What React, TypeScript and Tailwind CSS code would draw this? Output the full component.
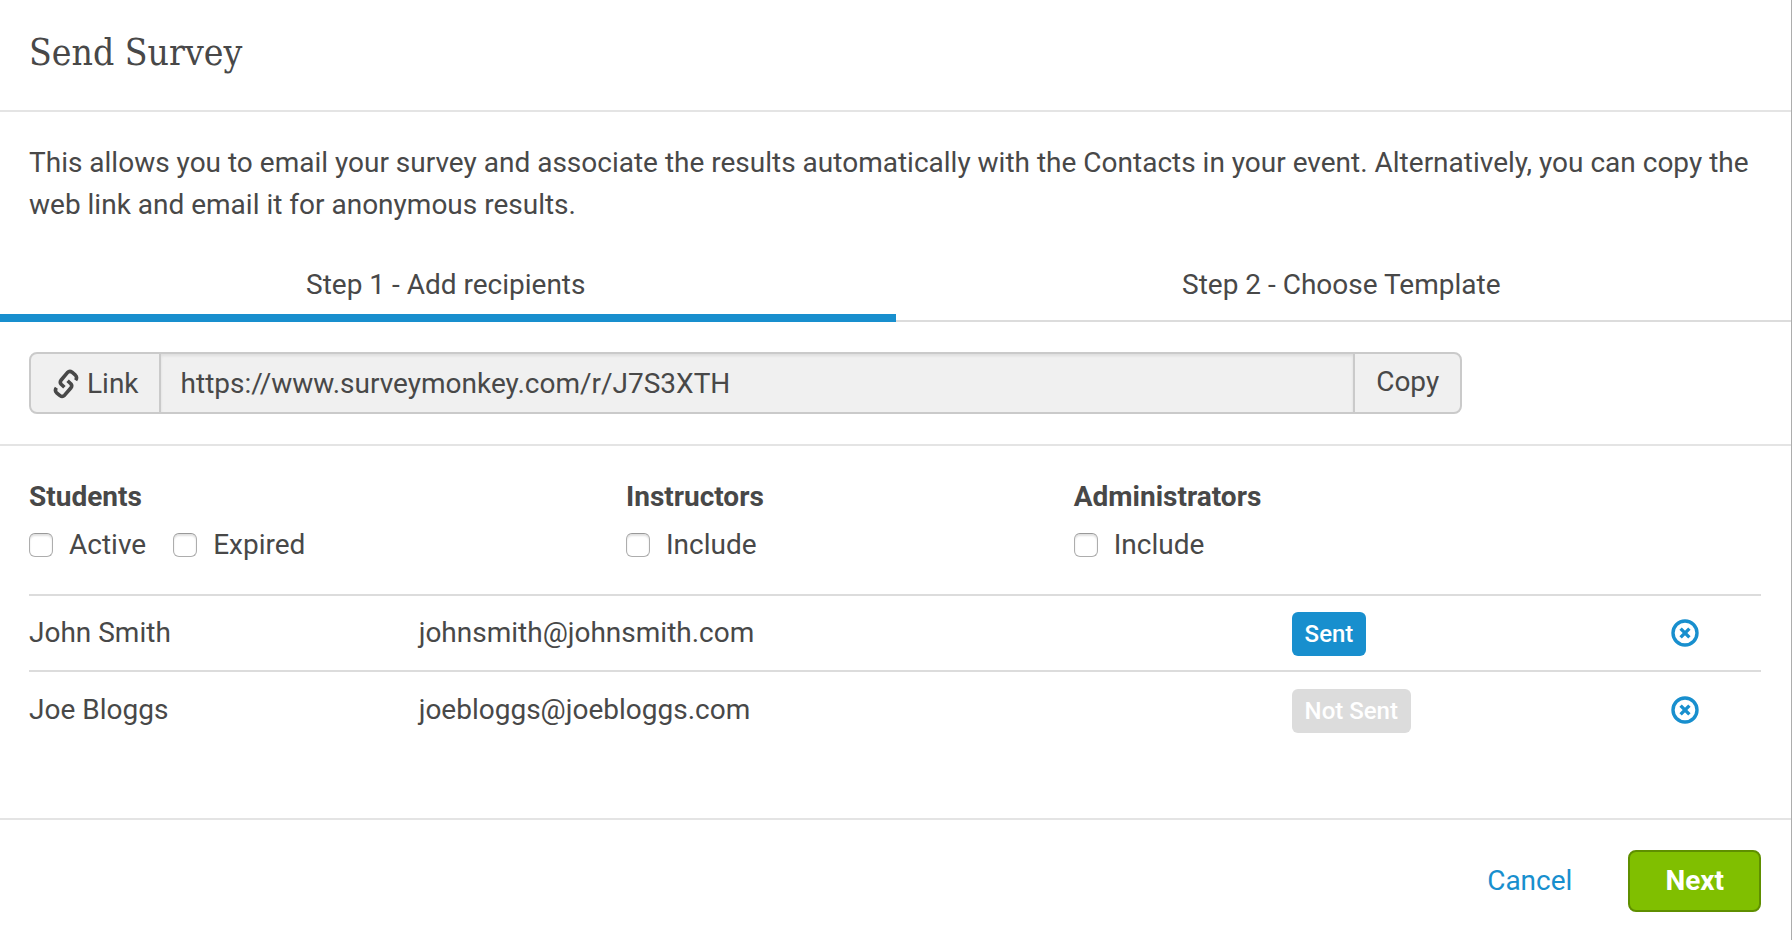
import { useState } from 'react';

type Recipient = {
    name: string;
    email: string;
    sent: boolean;
};

const SURVEY_URL = 'https://www.surveymonkey.com/r/J7S3XTH';

const initialRecipients: Recipient[] = [
    { name: 'John Smith', email: 'johnsmith@johnsmith.com', sent: true },
    { name: 'Joe Bloggs', email: 'joebloggs@joebloggs.com', sent: false },
];

const groups = [
    { title: 'Students', options: ['Active', 'Expired'], span: 'col-span-4' },
    { title: 'Instructors', options: ['Include'], span: 'col-span-3' },
    { title: 'Administrators', options: ['Include'], span: 'col-span-5' },
];

function LinkIcon() {
    return (
        <svg width="26" height="30" viewBox="0 0 26 30" fill="none" stroke="currentColor" strokeWidth="3.6" strokeLinejoin="round" aria-hidden="true">
            <path d="M11.4 18.2 L8.2 15.2 Q6.4 13.2 8.2 11 L14.4 3.6 Q16.6 1.4 19 3.2 L22.4 6.2 Q24.6 8.4 22.6 11.2" />
            <path d="M14.6 11.8 L17.8 14.8 Q19.6 16.8 17.8 19 L11.6 26.2 Q9.4 28.4 7 26.6 L3.6 23.8 Q1.4 21.6 3.4 18.8" />
        </svg>
    );
}

function RemoveIcon() {
    return (
        <svg width="28" height="28" viewBox="0 0 28 28" fill="none" stroke="currentColor" aria-hidden="true">
            <circle cx="14" cy="14" r="12" strokeWidth="3.4" />
            <path d="M9.6 9.6 L18.4 18.4 M18.4 9.6 L9.6 18.4" strokeWidth="3.4" />
        </svg>
    );
}

export default function SendSurvey() {
    const [recipients, setRecipients] = useState(initialRecipients);
    const [step, setStep] = useState(1);

    const tabs = ['Step 1 - Add recipients', 'Step 2 - Choose Template'];

    return (
        <main className="min-h-screen bg-white border-r border-[#adadad] text-[28px] leading-[42px] text-[#484848] font-[Roboto,sans-serif]">
            <header className="px-[29px] pt-[29px] pb-[33px] border-b-2 border-[#e4e4e4]">
                <h1 className="text-[37px] leading-12 font-light font-['Roboto_Slab','DejaVu_Serif_Condensed','DejaVu_Serif',serif]">Send Survey</h1>
            </header>

            <p className="px-[29px] pt-[30px]">
                This allows you to email your survey and associate the results automatically with the Contacts in your event. Alternatively, you can copy the web link and email it for anonymous results.
            </p>

            {/* Steps */}
            <div className="mt-[22px] grid grid-cols-2" role="tablist">
                {tabs.map((tab, i) => (
                    <button
                        key={tab}
                        type="button"
                        role="tab"
                        aria-selected={step === i + 1}
                        onClick={() => setStep(i + 1)}
                        className={`h-[74px] pt-4 pr-1 flex items-start justify-center ${step === i + 1 ? 'border-b-8 border-[#188fce]' : 'border-b-2 border-[#dcdcdc]'}`}
                    >
                        {tab}
                    </button>
                ))}
            </div>

            {/* Web link */}
            <section className="px-[29px] py-[30px] border-b-2 border-[#e4e4e4]">
                <div className="flex h-[62px] w-[82.7%] border-2 border-[#cacaca] rounded-lg bg-[#f0f0f0] overflow-hidden">
                    <label htmlFor="survey-link" className="flex items-center gap-2 pl-[22px] pr-5 pt-0.5 border-r-2 border-[#cacaca]">
                        <LinkIcon />
                        Link
                    </label>
                    <input
                        id="survey-link"
                        type="text"
                        readOnly
                        value={SURVEY_URL}
                        className="flex-1 min-w-0 px-5 pt-0.5 outline-none shadow-[inset_0_2px_3px_rgba(0,0,0,0.08)]"
                    />
                    <button type="button" onClick={() => navigator.clipboard?.writeText(SURVEY_URL)} className="px-[21px] pb-0.5 border-l-2 border-[#cacaca]">
                        Copy
                    </button>
                </div>
            </section>

            <div className="pt-[30px] pb-7 grid grid-cols-12">
                {groups.map(group => (
                    <fieldset key={group.title} className={`pl-[29px] ${group.span}`}>
                        <legend className="font-bold">{group.title}</legend>
                        <div className="mt-1.5 flex gap-[27px]">
                            {group.options.map(option => (
                                <label key={option} className="flex items-center gap-4">
                                    <input
                                        type="checkbox"
                                        className="appearance-none size-6 rounded-md border border-[#adadad] border-t-[#999999] bg-white checked:bg-[#188fce] shadow-[inset_0_2px_2px_rgba(0,0,0,0.12)]"
                                    />
                                    {option}
                                </label>
                            ))}
                        </div>
                    </fieldset>
                ))}
            </div>

            {/* Recipients */}
            <div className="pl-[29px] pr-[30px] pb-[71px]">
                <table className="w-full table-fixed">
                    <colgroup>
                        <col className="w-[22.5%]" />
                        <col className="w-[50.4%]" />
                        <col className="w-[18.3%]" />
                        <col />
                    </colgroup>
                    <tbody>
                        {recipients.map(r => (
                            <tr key={r.email} className="h-[76px] border-t-2 border-[#dcdcdc]">
                                <td>{r.name}</td>
                                <td>{r.email}</td>
                                <td>
                                    <span className={`flex w-fit h-11 mt-0.5 items-center px-[13px] rounded-md text-[24px] font-medium text-white ${r.sent ? 'bg-[#188fce]' : 'bg-[#dcdcdc]'}`}>
                                        {r.sent ? 'Sent' : 'Not Sent'}
                                    </span>
                                </td>
                                <td>
                                    <button
                                        type="button"
                                        aria-label={`Remove ${r.name}`}
                                        onClick={() => setRecipients(recipients.filter(x => x.email !== r.email))}
                                        className="block mx-auto text-[#188fce]"
                                    >
                                        <RemoveIcon />
                                    </button>
                                </td>
                            </tr>
                        ))}
                    </tbody>
                </table>
            </div>

            <footer className="px-[30px] py-[30px] flex items-center justify-end gap-14 border-t-2 border-[#e4e4e4]">
                <a href="#cancel" className="text-[#188fce]">Cancel</a>
                <button type="button" onClick={() => setStep(2)} className="h-[62px] px-[35px] rounded-lg border-2 border-[#5f8f00] bg-[#80bf00] font-bold text-white">
                    Next
                </button>
            </footer>
        </main>
    );
}
